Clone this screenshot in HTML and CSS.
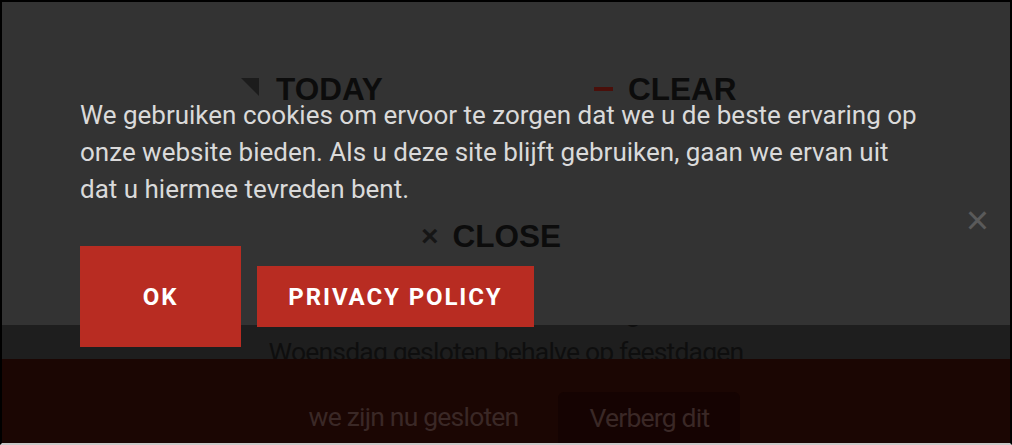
FILE: index.html
```html
<!DOCTYPE html>
<html lang="nl">
<head>
    <meta charset="UTF-8">
    <meta name="viewport" content="width=device-width, initial-scale=1.0">
    <title>Cookies</title>
    <link rel="stylesheet" href="styles.css">
</head>
<body>
    <div class="frame">
        <div class="cookie-bar">
            <p class="cookie-text">We gebruiken cookies om ervoor te zorgen dat we u de beste ervaring op onze website bieden. Als u deze site blijft gebruiken, gaan we ervan uit dat u hiermee tevreden bent.</p>
            <div class="cookie-actions">
                <button class="btn btn-ok">OK</button>
                <button class="btn btn-privacy">PRIVACY POLICY</button>
            </div>
            <button class="cookie-close" title="Sluiten">&times;</button>
        </div>

        <div class="hours">
            <div class="hours-title">Openingstijden vandaag</div>
            <div class="hours-line">Woensdag gesloten behalve op feestdagen</div>
        </div>

        <!-- menu ligt over de cookiebalk heen -->
        <div class="menu">
            <div class="menu-row">
                <span class="menu-item"><span class="icon-today"></span>TODAY</span>
                <span class="menu-item"><span class="icon-clear"></span>CLEAR</span>
            </div>
            <div class="menu-row menu-row-close">
                <span class="menu-item"><span class="icon-close">&times;</span>CLOSE</span>
            </div>
        </div>

        <div class="closed-bar">
            <span class="closed-text">we zijn nu gesloten</span>
            <button class="hide-btn">Verberg dit</button>
        </div>
    </div>
</body>
</html>
```

FILE: styles.css
```css
* {
    margin: 0;
    padding: 0;
    box-sizing: border-box;
}

body {
    font-family: Roboto, 'Liberation Sans', Arial, sans-serif;
    background: #1e1e1e;
}

.frame {
    position: relative;
    width: 1012px;
    height: 445px;
    overflow: hidden;
    background: #1e1e1e;
    border: 2px solid #000;
    border-bottom: 2px solid #c9c9c9;
}

.cookie-bar {
    position: relative;
    z-index: 2;
    height: 323px;
    background: #333333;
    padding: 95px 78px 0;
}

.cookie-text {
    max-width: 850px;
    font-size: 26px;
    line-height: 37px;
    color: #dadada;
}

.cookie-actions {
    display: flex;
    align-items: center;
    gap: 16px;
    margin-top: 38px;
}

.btn {
    border: none;
    background: #b82c22;
    color: #fff;
    font-family: Roboto, 'Liberation Sans', Arial, sans-serif;
    font-weight: 700;
    font-size: 24px;
    letter-spacing: 1.9px;
}

.btn-ok {
    width: 161px;
    height: 101px;
}

.btn-privacy {
    width: 277px;
    height: 61px;
}

.cookie-close {
    position: absolute;
    top: 198px;
    right: 21px;
    border: none;
    background: none;
    color: #5a5a5a;
    font-size: 40px;
    font-weight: 300;
    line-height: 1;
}

.hours {
    text-align: center;
    color: #0e0e0e;
    font-size: 26.5px;
    letter-spacing: -0.8px;
}

.hours-title {
    margin-top: -28px;
    line-height: 32px;
    font-weight: 500;
}

.hours-line {
    margin-top: 8px;
    line-height: 30px;
}

.menu {
    position: absolute;
    top: 0;
    left: 0;
    z-index: 3;
    width: 100%;
    padding: 69px 0 0 235px;
    font-family: 'Liberation Sans', Arial, sans-serif;
    font-weight: 700;
    font-size: 31.5px;
    color: #0c0c0c;
}

.menu-row {
    display: grid;
    grid-template-columns: 355px 355px;
    line-height: 36px;
}

.menu-row-close {
    margin-top: 111px;
    padding-left: 182px;
}

.menu-item {
    display: flex;
    align-items: center;
}

.icon-today {
    width: 0;
    height: 0;
    border-top: 18px solid #1c1c1c;
    border-left: 18px solid transparent;
    margin: 7px 17px 0 4px;
    align-self: flex-start;
}

.icon-clear {
    width: 19px;
    height: 4px;
    background: #4a0f0a;
    margin: 0 15px 0 2px;
}

.icon-close {
    font-size: 30px;
    color: #161616;
    margin: 0 14px 0 2px;
}

.closed-bar {
    position: absolute;
    left: 0;
    right: 0;
    bottom: 0;
    z-index: 1;
    height: 84px;
    background: #1b0603;
    display: flex;
    justify-content: center;
    align-items: flex-end;
    gap: 40px;
    padding-left: 37px;
}

.closed-text {
    font-size: 26.5px;
    letter-spacing: -0.8px;
    color: #3a2826;
    padding-bottom: 11px;
}

.hide-btn {
    width: 182px;
    height: 51px;
    border: none;
    border-radius: 6px 6px 0 0;
    background: #150302;
    color: #3a2826;
    font-family: Roboto, 'Liberation Sans', Arial, sans-serif;
    font-size: 26.5px;
    letter-spacing: -0.8px;
}
```
